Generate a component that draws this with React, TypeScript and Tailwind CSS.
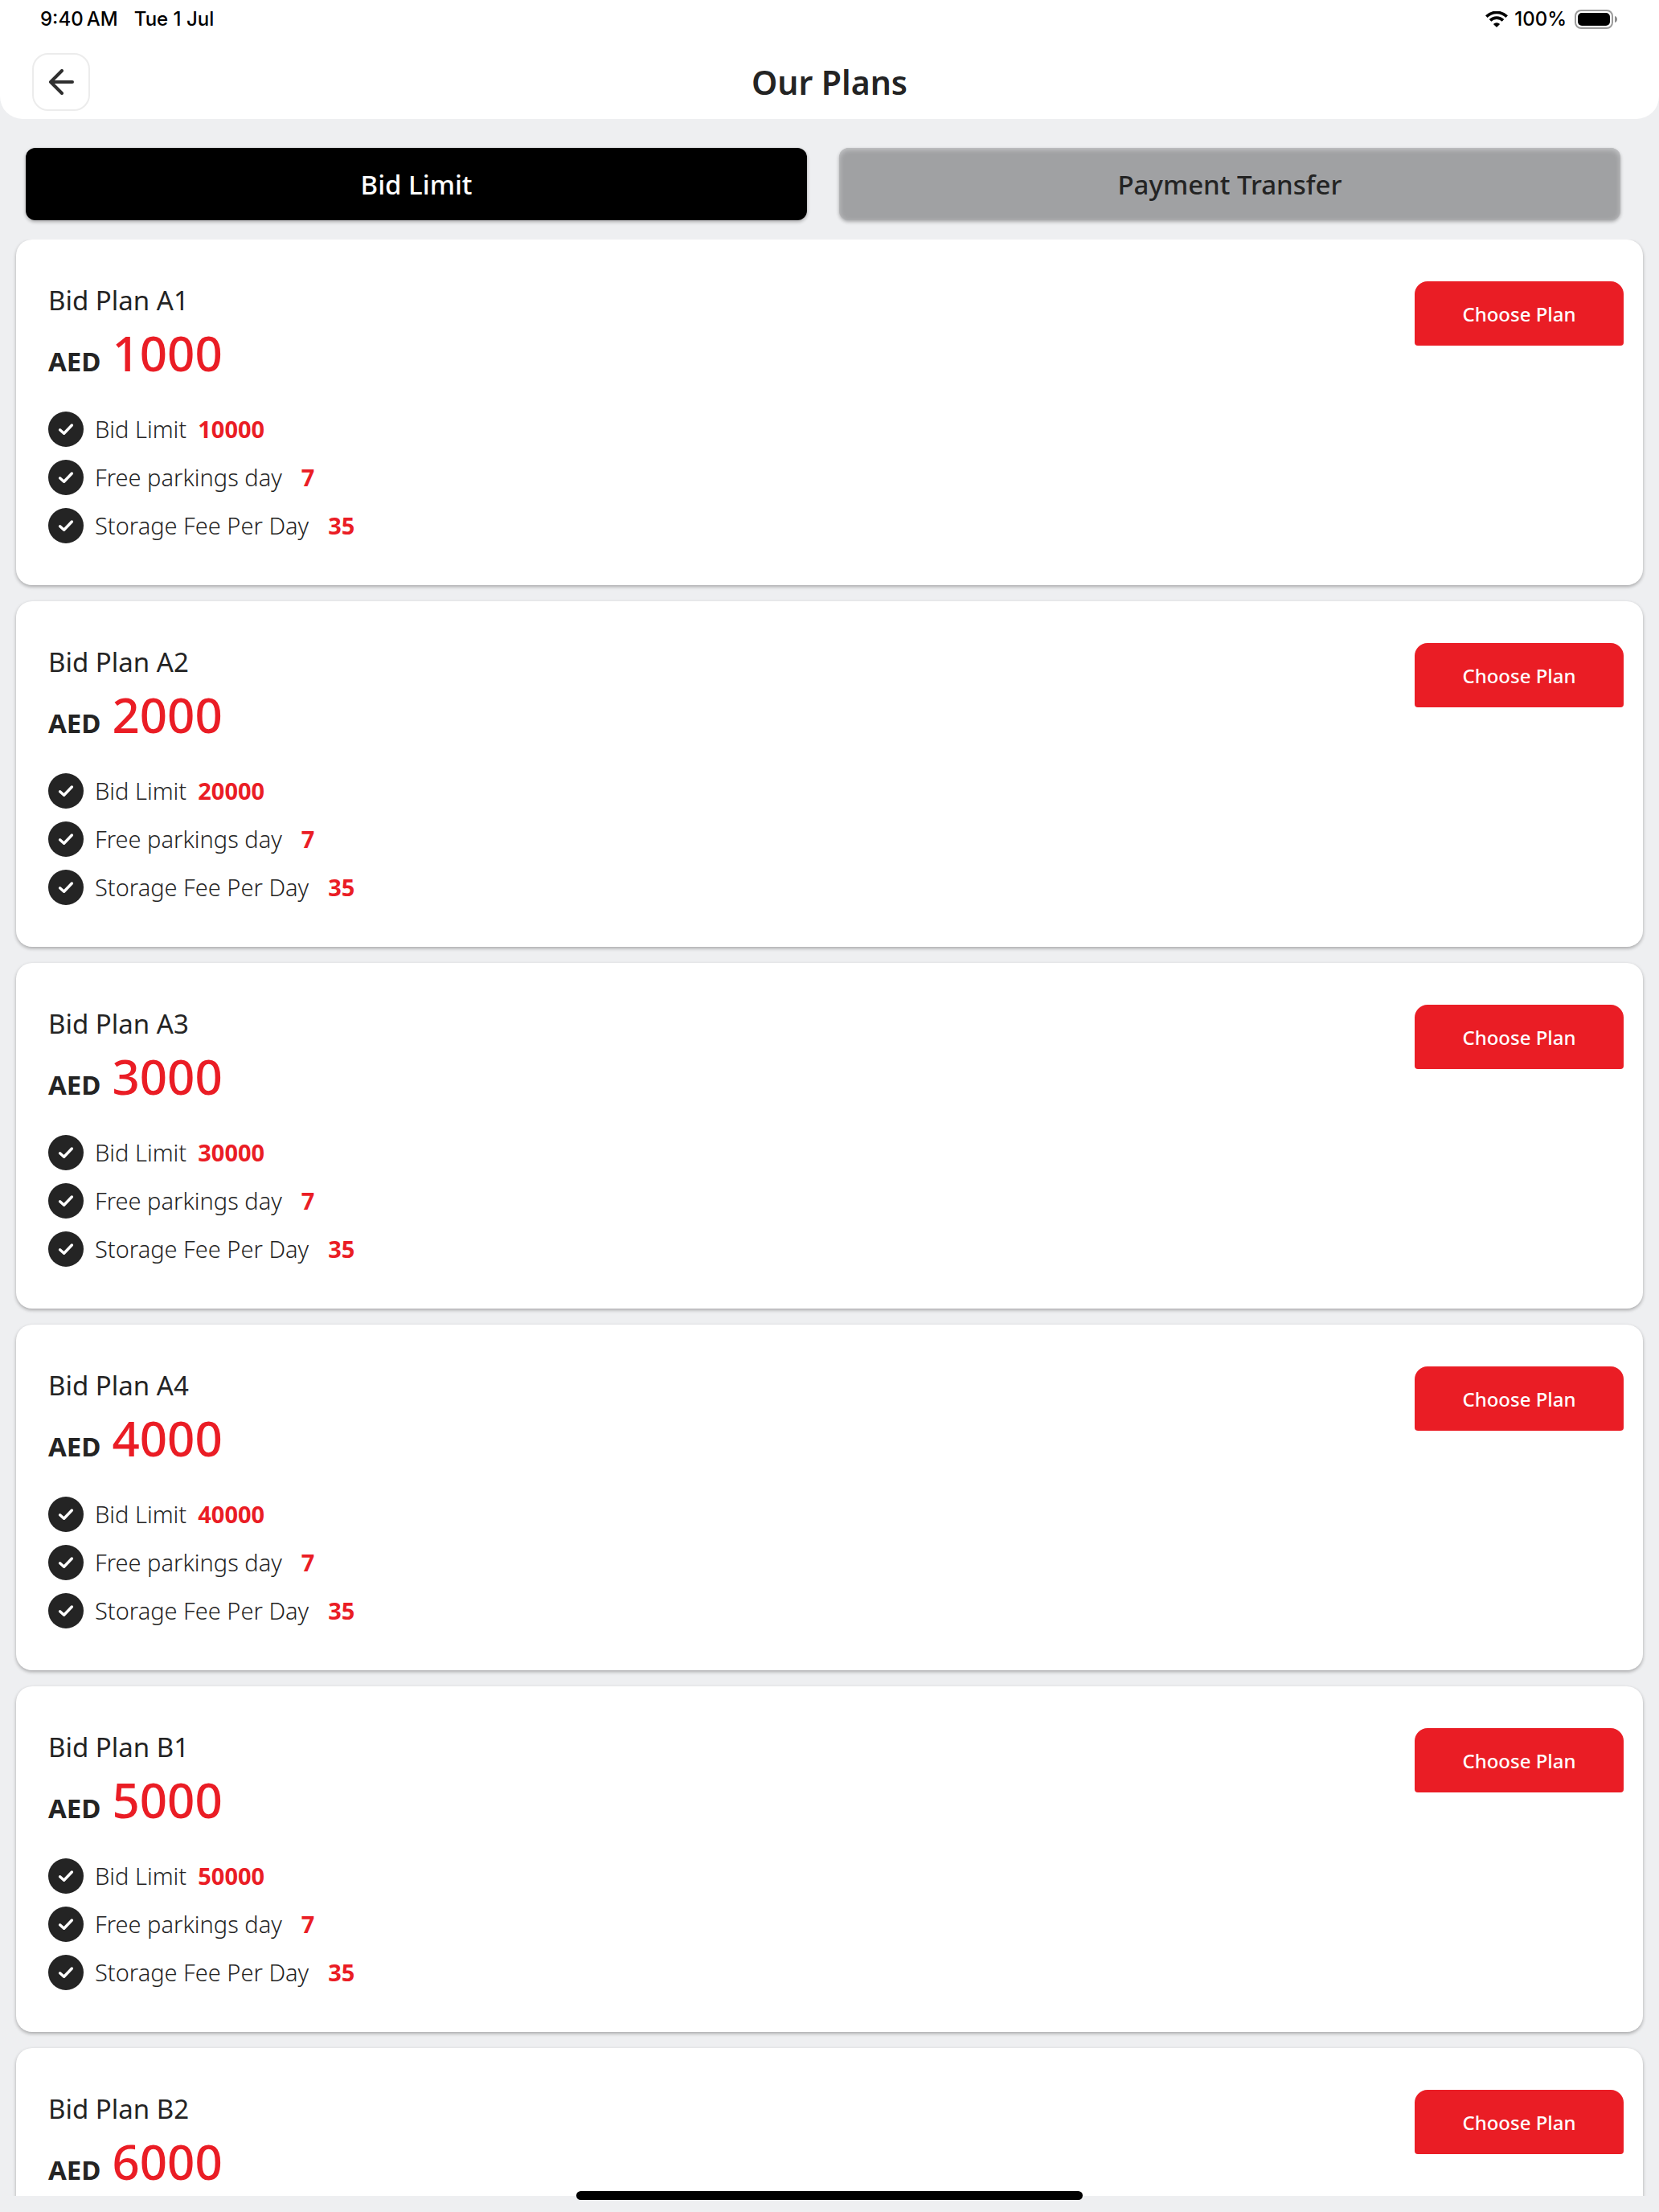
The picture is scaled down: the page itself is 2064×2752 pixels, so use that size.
import { clsx } from 'clsx';

interface Plan {
  name: string;
  price: number;
  bidLimit: number;
  freeDays: number;
  storageFee: number;
}

const plans: Plan[] = [
  { name: 'Bid Plan A1', price: 1000, bidLimit: 10000, freeDays: 7, storageFee: 35 },
  { name: 'Bid Plan A2', price: 2000, bidLimit: 20000, freeDays: 7, storageFee: 35 },
  { name: 'Bid Plan A3', price: 3000, bidLimit: 30000, freeDays: 7, storageFee: 35 },
  { name: 'Bid Plan A4', price: 4000, bidLimit: 40000, freeDays: 7, storageFee: 35 },
  { name: 'Bid Plan B1', price: 5000, bidLimit: 50000, freeDays: 7, storageFee: 35 },
  { name: 'Bid Plan B2', price: 6000, bidLimit: 60000, freeDays: 7, storageFee: 35 },
];

function WifiIcon() {
  return (
    <svg viewBox="0 0 28 20" className="h-5 w-7" fill="none" stroke="#000" aria-hidden="true">
      <path d="M1.3 6.6a18 18 0 0 1 25.4 0" strokeWidth="3.6" />
      <path d="M6 11.4a11.4 11.4 0 0 1 16 0" strokeWidth="3.6" />
      <path d="M14 20l-4.1-4.1a5.8 5.8 0 0 1 8.2 0z" fill="#000" stroke="none" />
    </svg>
  );
}

function BatteryIcon() {
  return (
    <svg viewBox="0 0 54 24" className="h-6 w-[54px]" aria-hidden="true">
      <rect x="1" y="1" width="46" height="22" rx="7" fill="none" stroke="#9b9b9b" strokeWidth="2" />
      <rect x="4" y="4" width="40" height="16" rx="5" fill="#000" />
      <path d="M50 8c4 1 4 7 0 8z" fill="#8c8c8c" />
    </svg>
  );
}

function StatusBar() {
  return (
    <div className="flex h-12 items-center justify-between pr-[51px] pl-[50px] font-['Inter',sans-serif] text-2xl font-medium text-black">
      <div className="flex gap-5">
        <span>9:40{'\u2009'}AM</span>
        <span>Tue 1 Jul</span>
      </div>
      <div className="flex items-center">
        <WifiIcon />
        <span className="mr-2.5 ml-2">100%</span>
        <BatteryIcon />
      </div>
    </div>
  );
}

function Header() {
  return (
    <header className="rounded-b-[28px] bg-white">
      <StatusBar />
      <div className="grid grid-cols-[1fr_auto_1fr] items-center px-10 pt-[18px] pb-2.5">
        <button
          type="button"
          aria-label="Back"
          className="flex size-18 items-center justify-center rounded-[20px] border-2 border-[#ececec]"
        >
          <svg viewBox="0 0 32 32" className="size-8" fill="none" stroke="#2f2f2f" strokeWidth="4" strokeLinecap="round" strokeLinejoin="round" aria-hidden="true">
            <path d="M30 16H3M17 2L3 16l14 14" />
          </svg>
        </button>
        <h1 className="text-[41px] leading-12 font-semibold">Our Plans</h1>
      </div>
    </header>
  );
}

function CheckIcon() {
  return (
    <svg viewBox="0 0 44 44" className="size-11 shrink-0" aria-hidden="true">
      <circle cx="22" cy="22" r="22" fill="#242424" />
      <path d="M14.6 22.8l5 4.4 9.8-10.2" fill="none" stroke="#fff" strokeWidth="3.4" strokeLinecap="round" strokeLinejoin="round" />
    </svg>
  );
}

function Feature({ label, value, wide }: { label: string; value: number; wide?: boolean }) {
  return (
    <li className="flex h-11 items-center text-[29px] leading-10">
      <CheckIcon />
      <span className="ml-3.5 font-light">{label}</span>
      <span className={clsx('font-bold text-[#ea1d25]', wide ? 'ml-6' : 'ml-3.5')}>{value}</span>
    </li>
  );
}

function PlanCard({ plan }: { plan: Plan }) {
  return (
    <article className="flex shrink-0 items-start justify-between rounded-[20px] bg-white pt-[52px] pr-6 pb-[52px] pl-10 shadow-[0_2px_4px_rgba(0,0,0,0.3)]">
      <div>
        <h2 className="text-[33px] leading-12">{plan.name}</h2>
        <p className="flex items-baseline gap-3.5">
          <span className="text-[33px] leading-none font-bold">AED</span>
          <span className="text-[60px] leading-[82px] font-medium text-[#ea1d25]">{plan.price}</span>
        </p>
        <ul className="mt-8 flex flex-col gap-4">
          <Feature label="Bid Limit" value={plan.bidLimit} />
          <Feature label="Free parkings day" value={plan.freeDays} wide />
          <Feature label="Storage Fee Per Day" value={plan.storageFee} wide />
        </ul>
      </div>
      <button
        type="button"
        className="h-20 w-[260px] rounded-t-2xl rounded-b bg-[#ea1d25] pt-0.5 text-2xl font-medium text-white"
      >
        Choose Plan
      </button>
    </article>
  );
}

export default function App() {
  return (
    <div className="relative flex h-screen flex-col overflow-hidden bg-[#eeeff1] font-['Noto_Sans',sans-serif] text-[#242424]">
      <Header />
      <main className="flex min-h-0 flex-1 flex-col">
        <div className="grid grid-cols-2 gap-10 pt-9 pr-12 pb-6 pl-8 text-[33px] font-medium">
          <button type="button" className="h-[90px] rounded-xl bg-black pt-0.5 text-white shadow-[0_2px_4px_rgba(0,0,0,0.3)]">
            Bid Limit
          </button>
          <button
            type="button"
            className="h-[90px] rounded-xl bg-[#a0a1a3] pt-0.5 shadow-[0_2px_4px_rgba(0,0,0,0.3),inset_0_2px_6px_#c8c9cb]"
          >
            Payment Transfer
          </button>
        </div>
        <div className="flex min-h-0 flex-1 flex-col gap-5 overflow-hidden px-5">
          {plans.map(plan => (
            <PlanCard key={plan.name} plan={plan} />
          ))}
        </div>
      </main>
      <div className="h-5 shrink-0" />
      {/* Home indicator */}
      <div className="absolute bottom-[15px] left-1/2 h-[11px] w-[630px] -translate-x-1/2 rounded-full bg-black" />
    </div>
  );
}
